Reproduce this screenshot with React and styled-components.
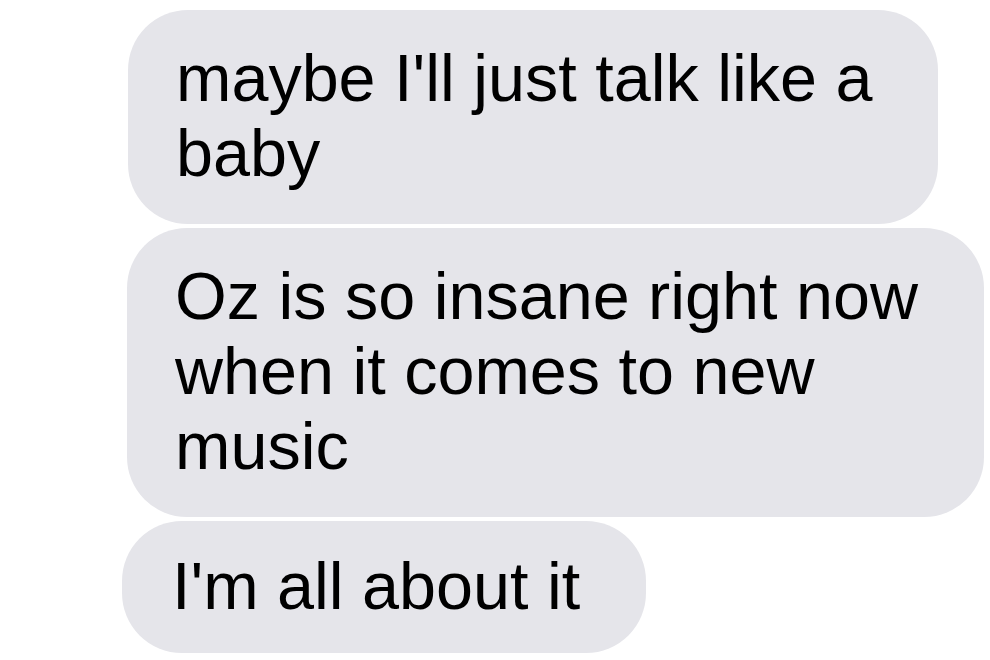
import React from "react";
import styled, { createGlobalStyle } from "styled-components";

const GlobalStyle = createGlobalStyle`
  html, body {
    margin: 0;
    padding: 0;
    background: #ffffff;
  }
  body {
    font-family: "Liberation Sans", Arial, Helvetica, sans-serif;
    -webkit-font-smoothing: antialiased;
  }
`;

const Thread = styled.div`
  width: 990px;
  height: 660px;
  overflow: hidden;
  box-sizing: border-box;
  padding: 10px 0 0 127px;
  display: flex;
  flex-direction: column;
  align-items: flex-start;
  gap: 4px;
  background: #ffffff;
`;

const Bubble = styled.div`
  box-sizing: border-box;
  background: #e5e5ea;
  color: #000000;
  border-radius: 60px;
  padding: ${(p) => (p.$single ? "28px 66px 29px 50px" : "31px 66px 33px 48px")};
  margin-left: ${(p) => p.$shift || 0}px;
  font-size: 66.5px;
  line-height: 75px;
`;

const Line = styled.span`
  display: block;
  white-space: nowrap;
`;

const messages = [
  { lines: ["maybe I'll just talk like a", "baby"], shift: 1 },
  { lines: ["Oz is so insane right now", "when it comes to new", "music"], shift: 0 },
  { lines: ["I'm all about it"], shift: -5, single: true },
];

export default function App() {
  return (
    <>
      <GlobalStyle />
      <Thread>
        {messages.map((m, i) => (
          <Bubble key={i} $shift={m.shift} $single={m.single}>
            {m.lines.map((l, j) => (
              <Line key={j}>{l}</Line>
            ))}
          </Bubble>
        ))}
      </Thread>
    </>
  );
}
